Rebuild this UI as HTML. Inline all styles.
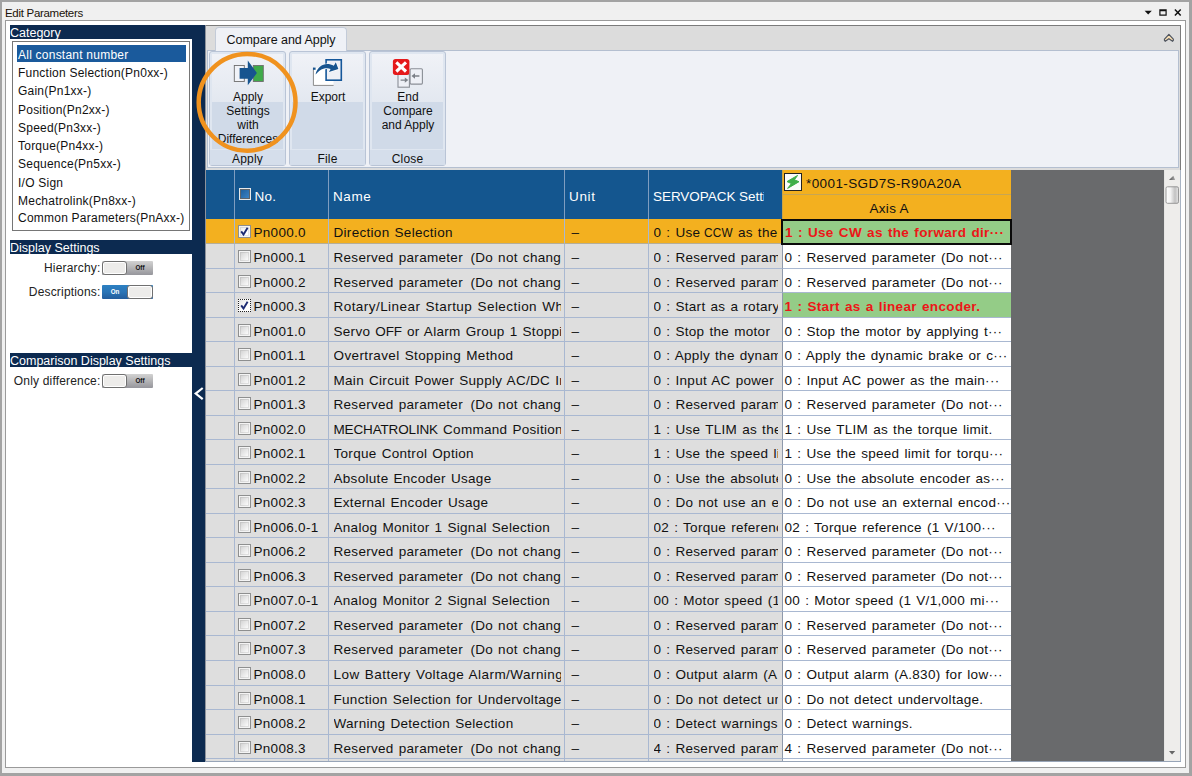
<!DOCTYPE html>
<html><head><meta charset="utf-8"><title>Edit Parameters</title>
<style>
*{box-sizing:border-box;margin:0;padding:0}
html,body{width:1192px;height:776px;overflow:hidden}
body{font-family:"Liberation Sans",sans-serif;background:#a3a3a3;position:relative;color:#111}
.abs,.abs>*{position:absolute}
i{font-style:normal}
/* window chrome */
#win{left:2px;top:2px;width:1187px;height:771px;background:#f0f0f0}
#title{left:5px;top:6px;font-size:11.5px;line-height:14px;color:#1a1208;letter-spacing:-.3px;white-space:nowrap}
#inner{left:5px;top:20px;width:1181px;height:748px;background:#fff;border:1px solid #9a9a9a}
/* left panel */
.hd{left:10px;width:182px;height:14px;background:#0c2a50;color:#fff;font-size:12.5px;line-height:16px;white-space:nowrap;overflow:hidden}
#list{left:12px;top:41px;width:178px;height:190px;border:1px solid #767676;background:#fff}
.li{left:17px;width:169px;height:17px;font-size:12px;line-height:20px;padding-left:1px;white-space:nowrap;color:#111;letter-spacing:.23px;overflow:hidden}
.li.s{background:#1a5a9c;color:#fff}
.lab{font-size:12px;line-height:14px;white-space:nowrap;text-align:right;width:100.500px;left:0;color:#222;letter-spacing:.18px}
.tg{left:102px;width:51px;height:14px;border-radius:1px;overflow:hidden;font-size:8px;font-weight:bold;line-height:14px;text-align:center}
.tg .k{top:0;width:25px;height:14px;border:1px solid #707070;border-radius:3px;background:#edecea;box-shadow:inset 0 0 0 1px #fff}
.tg .o{top:0;width:26px;height:14px;transform:scaleX(.78)}
.tg.off{background:linear-gradient(#d2d2d2,#b4b4b6 50%,#96969c)}
.tg.off .k{left:0}.tg.off .o{left:25px;color:#111}
.tg.on{background:linear-gradient(#2c80c2,#2a74b6 50%,#225c9c)}
.tg.on .k{left:25px;width:26px}.tg.on .o{left:0;color:#fff}
#split{left:192px;top:25px;width:13px;height:737px;background:#0c2a50}
/* ribbon */
#rib{left:205px;top:25px;width:976px;height:145px;background:#dcdcdc;border-top:1px solid #7b7b7b;border-right:1px solid #7b7b7b}
#tab{left:215px;top:27px;width:132px;height:24px;background:#eff1f6;border:1px solid #c3cbd8;border-bottom:none;border-radius:4px 4px 0 0;font-size:12.5px;line-height:24.500px;text-align:center;color:#111;white-space:nowrap;letter-spacing:-.05px}
#rbody{left:207px;top:50px;width:972px;height:118px;background:#eff1f6;border:1px solid #b4bfd0}
#lb{left:205px;top:25px;width:1px;height:737px;background:#8e939c}
.grp{top:51px;width:77px;height:115px;border:1px solid #b9c4d6;border-radius:3px;background:#dfe6f0}
.grp .b1{left:2px;top:2px;width:71px;height:48px;background:linear-gradient(#f0f2f7,#e3e8f0)}
.grp .b2{left:2px;top:50px;width:71px;height:47px;background:#d0dae8}
.grp .gl{left:0;top:98px;width:75px;height:15px;background:#d5deeb;font-size:12px;line-height:18px;overflow:hidden;letter-spacing:.2px;text-align:center;color:#111}
.bt{font-size:12px;line-height:14px;text-align:center;white-space:nowrap;color:#111}
/* grid */
#grid{left:206px;top:170px;width:958px;height:591px;background:#696a6c;overflow:hidden}
#gh{left:0;top:0;width:576px;height:49px;background:#14568f}
.hl{top:0;width:1px;height:49px;background:#7f9dc0}
.ht{color:#fff;font-size:13.5px;line-height:16px;white-space:nowrap;letter-spacing:.15px}
#ah{left:576px;top:0;width:229px;height:49px;background:#f3b01f;border-left:1px solid #c9a449}
.r{position:absolute;left:206px;width:805px;font-size:13.5px;white-space:nowrap;color:#111;letter-spacing:.3px;word-spacing:1px}
.r .c{position:absolute;top:0;height:100%;border-bottom:1px solid #a9b8d1;border-left:1px solid #a9b8d1;background:#dedede;overflow:hidden}
.r.sel .c{background:#f3b01f;border-bottom-color:#b5ae98}
.r.last .c{border-bottom:none}
.c0{left:0;width:29px;border-left:none!important}
.c1{left:28px;width:94px}
.c2{left:122px;width:236px}
.c3{left:358px;width:84px}
.c4{left:442px;width:134px}
.c4 .t{left:4.500px;width:124px;overflow:hidden;height:100%}
.c2 .t{left:4.500px;width:227.300px;overflow:hidden;height:100%}
.uc{letter-spacing:-.15px}
.uc2{display:inline-block;transform:scaleX(.875);transform-origin:0 50%;margin-right:-4.100px;margin-left:-1.600px}
.g{margin-left:2.400px}
.w1{letter-spacing:.45px}
.w2{letter-spacing:.38px}
.ax{left:576px;width:229px;background:#fff!important;border-left:1px solid #8e99ab!important}
.ax.diff{background:#94cc87!important;color:#ec1618;font-weight:bold;letter-spacing:.35px}
.ax.cur{border:2px solid #0a0a0a!important;left:575px;width:231px;top:0!important;height:26px!important}
.r.sel{z-index:2}
.t{position:absolute;top:1px;left:4px}
.c1 .t{left:18.500px}
.c3 .t{left:6.500px}
.ax .t{left:1.500px}
.ax.cur .t{left:2px;top:-1px}
.cb svg{position:absolute;left:0;top:0}
.cb.on{background:linear-gradient(135deg,#e4e4e4,#fff 60%)}
.cb.dot{border:1px dotted #222;box-shadow:none}
.cb{position:absolute;left:3px;top:6px;width:13px;height:13px;border:1px solid #8e8f8f;background:linear-gradient(135deg,#cbcbcb,#f7f7f7 75%);box-shadow:inset 0 0 0 1px #f4f4f4,inset 0 0 0 2px rgba(150,150,150,.25)}
/* scrollbar */
#sb{left:1164px;top:170px;width:16px;height:591px;background:#eeedeb;border-left:1px solid #e6e6e4}
#rb{left:1180px;top:170px;width:1px;height:592px;background:#a8b4c4}
#bb{left:205px;top:761px;width:976px;height:1px;background:#98a5b8}
</style></head><body>
<div class="abs">
<div id="win"></div>
<div id="title">Edit Parameters</div>
<svg style="left:1144px;top:7px" width="40" height="12" viewBox="0 0 40 12"><path d="M.6 3.800h7.200L4.200 7.400z" fill="#111"/><path d="M15.300 2.300h7.400v6.400h-7.400z M16.500 4.300v3.300h5v-3.300z" fill="#111" fill-rule="evenodd"/><path d="M30.900 2.500l5.800 6M36.700 2.500l-5.800 6" stroke="#111" stroke-width="1.500"/></svg>
<div id="inner"></div>

<!-- left panel -->
<div class="hd" style="top:25px">Category</div>
<div id="list"></div>
<div class="li s" style="top:45px">All constant number</div>
<div class="li" style="top:63px">Function Selection(Pn0xx-)</div>
<div class="li" style="top:81px">Gain(Pn1xx-)</div>
<div class="li" style="top:100px">Position(Pn2xx-)</div>
<div class="li" style="top:118px">Speed(Pn3xx-)</div>
<div class="li" style="top:136px">Torque(Pn4xx-)</div>
<div class="li" style="top:154px">Sequence(Pn5xx-)</div>
<div class="li" style="top:173px">I/O Sign</div>
<div class="li" style="top:191px">Mechatrolink(Pn8xx-)</div>
<div class="li" style="top:208px">Common Parameters(PnAxx-)</div>

<div class="hd" style="top:240px">Display Settings</div>
<div class="lab" style="top:261px">Hierarchy:</div>
<div class="tg off abs" style="top:261px"><i class="k"></i><i class="o">Off</i></div>
<div class="lab" style="top:285px">Descriptions:</div>
<div class="tg on abs" style="top:285px"><i class="k"></i><i class="o">On</i></div>
<div class="hd" style="top:353px">Comparison Display Settings</div>
<div class="lab" style="top:374px">Only difference:</div>
<div class="tg off abs" style="top:374px"><i class="k"></i><i class="o">Off</i></div>

<div id="split"></div>
<svg style="left:192px;top:384px" width="14" height="18" viewBox="0 0 14 18"><path d="M10.700 4L3.700 9.600l7 5.600" fill="none" stroke="#fff" stroke-width="2.200"/></svg>

<!-- ribbon -->
<div id="rib"></div>
<div id="rbody"></div><div id="lb"></div>
<div id="tab">Compare and Apply</div>
<svg style="left:1162px;top:32px" width="14" height="12" viewBox="0 0 14 12"><path d="M6.900 2.400L2.500 7.100Q1.900 8.300 3.200 9.300L6.900 6.700 10.600 9.300Q11.900 8.300 11.300 7.100z" fill="#f8dfb4" stroke="#4d535e" stroke-width="1.200" stroke-linejoin="round"/></svg>

<div class="grp abs" style="left:209px"><i class="b1"></i><i class="b2"></i><i class="gl">Apply</i></div>
<div class="grp abs" style="left:289px"><i class="b1"></i><i class="b2"></i><i class="gl">File</i></div>
<div class="grp abs" style="left:369px"><i class="b1"></i><i class="b2"></i><i class="gl">Close</i></div>

<div class="bt" style="left:209px;top:90px;width:78px">Apply<br>Settings<br>with<br>Differences</div>
<div class="bt" style="left:289px;top:90px;width:78px">Export</div>
<div class="bt" style="left:369px;top:90px;width:78px">End<br>Compare<br>and Apply</div>

<!-- icons -->
<svg style="left:230px;top:58px" width="38" height="30" viewBox="0 0 38 30">
<rect x="4.300" y="7.500" width="10" height="16" fill="#f1f3f8" stroke="#6e6e6e" stroke-width=".9"/>
<rect x="23.300" y="7.500" width="10" height="16" fill="#3fab4a" stroke="#6e6e6e" stroke-width=".9"/>
<path d="M9.600 9.900h8.200V2.500L26.900 15 17.800 27.200V20.800H9.600z" fill="#17548f"/></svg>
<svg style="left:310px;top:57px" width="36" height="32" viewBox="0 0 36 32">
<path d="M3.400 10.800H23.500V28.400H3.400z" fill="#fff"/><path d="M3.400 10.800V28.400H23.600" fill="none" stroke="#8a8a8a" stroke-width="1"/><path d="M3 10.600h2.600v2.200H3z" fill="#17548f"/>
<rect x="16.100" y="2.800" width="15.200" height="20.400" fill="#eef0f6" stroke="#15579a" stroke-width="1.600"/>
<path d="M5.500 17.400C7 11 12 7.200 17 7.100 19.500 7.100 22 7.700 23.800 8.700L25.800 5.200 28.400 12.100 18.900 14.900 20.600 11.900C17 10.800 13 11.500 10.600 13 8.500 14.300 7 16.200 5.500 17.400z" fill="#17548f" stroke="#fff" stroke-width="1.300" paint-order="stroke" stroke-linejoin="round"/></svg>
<svg style="left:390px;top:57px" width="36" height="32" viewBox="0 0 36 32">
<rect x="20.100" y="11.700" width="12.300" height="15.400" rx="1" fill="#eef0f6" stroke="#8a8e96" stroke-width="1.100"/>
<rect x="8" y="17" width="11.400" height="13.200" fill="#eef0f6" stroke="#8a8e96" stroke-width="1.100"/>
<path d="M10.600 23.100h5M29.400 19h-5" fill="none" stroke="#7c8088" stroke-width="1.300"/>
<path d="M14.800 20.400l3.500 2.700-3.500 2.700zM25 16.300l-3.500 2.700 3.500 2.700z" fill="#7c8088"/>
<rect x="2.900" y="2" width="16.500" height="15.900" rx="2.600" fill="#e5191b"/>
<path d="M6.300 5.400l9.700 9.100M16 5.400l-9.700 9.100" stroke="#fff" stroke-width="3.100"/></svg>

<!-- grid -->
<div id="grid" class="abs">
 <div id="gh"></div>
 <i class="hl" style="left:28px"></i><i class="hl" style="left:122px"></i><i class="hl" style="left:358px"></i><i class="hl" style="left:442px"></i>
 <i style="left:33px;top:18px;width:12px;height:12px;border:1px solid #e8e8e8;background:linear-gradient(135deg,#1b5c9a,#3f86c8);box-shadow:inset 0 0 0 1px #5c646c"></i>
 <i class="ht" style="left:48.500px;top:18.500px;letter-spacing:.2px">No.</i>
 <i class="ht" style="left:127px;top:18.500px;letter-spacing:.6px">Name</i>
 <i class="ht" style="left:363px;top:18.500px;letter-spacing:.65px">Unit</i>
 <i class="ht" style="left:447px;top:18.500px;width:110.500px;overflow:hidden;letter-spacing:-.05px">SERVOPACK Setti</i>
 <div id="ah"></div>
 <i style="left:577px;top:24px;width:228px;height:1px;background:#c7a654"></i>
 <i style="left:578px;top:3px;width:18px;height:18px;background:#fbfbfb;border:1px solid #222"></i>
 <svg style="left:578px;top:3px" width="18" height="18" viewBox="0 0 18 18"><path d="M13.600 2.400L3 8.600l4.400 2L3.600 15.400 15 8.700 10.400 6.800z" fill="#3fae49" stroke="#3fae49" stroke-width="1" stroke-linejoin="round"/></svg>
 <i class="ht" style="left:600px;top:5.500px;color:#111;font-size:13.5px;letter-spacing:.4px">*0001-SGD7S-R90A20A</i>
 <i class="ht" style="left:663.500px;top:30.500px;color:#111;font-size:13.5px;letter-spacing:.3px">Axis A</i>
</div>
<div class="r sel" style="top:219px;height:25px;line-height:26px"><i class="c c0"></i><i class="c c1"><b class="cb on"><svg width="11" height="11" viewBox="0 0 11 11"><path d="M2.200 5.400l2.300 3.200L8.600 1.800" fill="none" stroke="#1d2b73" stroke-width="1.900"/></svg></b><span class="t no">Pn000.0</span></i><i class="c c2"><span class="t nm">Direction Selection</span></i><i class="c c3"><span class="t">–</span></i><i class="c c4"><span class="t sv">0 : Use <span class=uc2>CCW</span> as the forward</span></i><i class="c ax diff cur"><span class="t av">1 : Use CW as the forward dir···</span></i></div>
<div class="r" style="top:244px;height:25px;line-height:26px"><i class="c c0"></i><i class="c c1"><b class="cb"></b><span class="t no">Pn000.1</span></i><i class="c c2"><span class="t nm">Reserved parameter <span class=g>(Do</span> not change</span></i><i class="c c3"><span class="t">–</span></i><i class="c c4"><span class="t sv">0 : Reserved parameter</span></i><i class="c ax"><span class="t av">0 : Reserved parameter (Do not···</span></i></div>
<div class="r" style="top:269px;height:24px;line-height:25px"><i class="c c0"></i><i class="c c1"><b class="cb"></b><span class="t no">Pn000.2</span></i><i class="c c2"><span class="t nm">Reserved parameter <span class=g>(Do</span> not change</span></i><i class="c c3"><span class="t">–</span></i><i class="c c4"><span class="t sv">0 : Reserved parameter</span></i><i class="c ax"><span class="t av">0 : Reserved parameter (Do not···</span></i></div>
<div class="r" style="top:293px;height:25px;line-height:26px"><i class="c c0"></i><i class="c c1"><b class="cb on dot"><svg width="11" height="11" viewBox="0 0 11 11"><path d="M2.200 5.400l2.300 3.200L8.600 1.800" fill="none" stroke="#1d2b73" stroke-width="1.900"/></svg></b><span class="t no">Pn000.3</span></i><i class="c c2"><span class="t nm"><span class=w1>Rotary/Linear Startup Selection Whe</span></span></i><i class="c c3"><span class="t">–</span></i><i class="c c4"><span class="t sv">0 : Start as a rotary</span></i><i class="c ax diff"><span class="t av">1 : Start as a linear encoder.</span></i></div>
<div class="r" style="top:318px;height:24px;line-height:25px"><i class="c c0"></i><i class="c c1"><b class="cb"></b><span class="t no">Pn001.0</span></i><i class="c c2"><span class="t nm">Servo <span class=uc>OFF</span> or Alarm Group 1 Stopping</span></i><i class="c c3"><span class="t">–</span></i><i class="c c4"><span class="t sv">0 : Stop the motor</span></i><i class="c ax"><span class="t av">0 : Stop the motor by applying t···</span></i></div>
<div class="r" style="top:342px;height:25px;line-height:26px"><i class="c c0"></i><i class="c c1"><b class="cb"></b><span class="t no">Pn001.1</span></i><i class="c c2"><span class="t nm"><span class=w2>Overtravel Stopping Method</span></span></i><i class="c c3"><span class="t">–</span></i><i class="c c4"><span class="t sv">0 : Apply the dynam</span></i><i class="c ax"><span class="t av">0 : Apply the dynamic brake or c···</span></i></div>
<div class="r" style="top:367px;height:24px;line-height:25px"><i class="c c0"></i><i class="c c1"><b class="cb"></b><span class="t no">Pn001.2</span></i><i class="c c2"><span class="t nm">Main Circuit Power Supply AC/DC In</span></i><i class="c c3"><span class="t">–</span></i><i class="c c4"><span class="t sv">0 : Input AC power</span></i><i class="c ax"><span class="t av">0 : Input AC power as the main···</span></i></div>
<div class="r" style="top:391px;height:25px;line-height:26px"><i class="c c0"></i><i class="c c1"><b class="cb"></b><span class="t no">Pn001.3</span></i><i class="c c2"><span class="t nm">Reserved parameter <span class=g>(Do</span> not change</span></i><i class="c c3"><span class="t">–</span></i><i class="c c4"><span class="t sv">0 : Reserved parameter</span></i><i class="c ax"><span class="t av">0 : Reserved parameter (Do not···</span></i></div>
<div class="r" style="top:416px;height:24px;line-height:25px"><i class="c c0"></i><i class="c c1"><b class="cb"></b><span class="t no">Pn002.0</span></i><i class="c c2"><span class="t nm"><span class=uc>MECHATROLINK</span> Command Position a</span></i><i class="c c3"><span class="t">–</span></i><i class="c c4"><span class="t sv">1 : Use TLIM as the t</span></i><i class="c ax"><span class="t av">1 : Use TLIM as the torque limit.</span></i></div>
<div class="r" style="top:440px;height:25px;line-height:26px"><i class="c c0"></i><i class="c c1"><b class="cb"></b><span class="t no">Pn002.1</span></i><i class="c c2"><span class="t nm">Torque Control Option</span></i><i class="c c3"><span class="t">–</span></i><i class="c c4"><span class="t sv">1 : Use the speed lim</span></i><i class="c ax"><span class="t av">1 : Use the speed limit for torqu···</span></i></div>
<div class="r" style="top:465px;height:24px;line-height:25px"><i class="c c0"></i><i class="c c1"><b class="cb"></b><span class="t no">Pn002.2</span></i><i class="c c2"><span class="t nm">Absolute Encoder Usage</span></i><i class="c c3"><span class="t">–</span></i><i class="c c4"><span class="t sv">0 : Use the absolute</span></i><i class="c ax"><span class="t av">0 : Use the absolute encoder as···</span></i></div>
<div class="r" style="top:489px;height:25px;line-height:26px"><i class="c c0"></i><i class="c c1"><b class="cb"></b><span class="t no">Pn002.3</span></i><i class="c c2"><span class="t nm">External Encoder Usage</span></i><i class="c c3"><span class="t">–</span></i><i class="c c4"><span class="t sv">0 : Do not use an ex</span></i><i class="c ax"><span class="t av">0 : Do not use an external encod···</span></i></div>
<div class="r" style="top:514px;height:24px;line-height:25px"><i class="c c0"></i><i class="c c1"><b class="cb"></b><span class="t no">Pn006.0-1</span></i><i class="c c2"><span class="t nm">Analog Monitor 1 Signal Selection</span></i><i class="c c3"><span class="t">–</span></i><i class="c c4"><span class="t sv">02 : Torque reference</span></i><i class="c ax"><span class="t av">02 : Torque reference (1 V/100···</span></i></div>
<div class="r" style="top:538px;height:25px;line-height:26px"><i class="c c0"></i><i class="c c1"><b class="cb"></b><span class="t no">Pn006.2</span></i><i class="c c2"><span class="t nm">Reserved parameter <span class=g>(Do</span> not change</span></i><i class="c c3"><span class="t">–</span></i><i class="c c4"><span class="t sv">0 : Reserved parameter</span></i><i class="c ax"><span class="t av">0 : Reserved parameter (Do not···</span></i></div>
<div class="r" style="top:563px;height:24px;line-height:25px"><i class="c c0"></i><i class="c c1"><b class="cb"></b><span class="t no">Pn006.3</span></i><i class="c c2"><span class="t nm">Reserved parameter <span class=g>(Do</span> not change</span></i><i class="c c3"><span class="t">–</span></i><i class="c c4"><span class="t sv">0 : Reserved parameter</span></i><i class="c ax"><span class="t av">0 : Reserved parameter (Do not···</span></i></div>
<div class="r" style="top:587px;height:25px;line-height:26px"><i class="c c0"></i><i class="c c1"><b class="cb"></b><span class="t no">Pn007.0-1</span></i><i class="c c2"><span class="t nm">Analog Monitor 2 Signal Selection</span></i><i class="c c3"><span class="t">–</span></i><i class="c c4"><span class="t sv">00 : Motor speed (1 V</span></i><i class="c ax"><span class="t av">00 : Motor speed (1 V/1,000 mi···</span></i></div>
<div class="r" style="top:612px;height:24px;line-height:25px"><i class="c c0"></i><i class="c c1"><b class="cb"></b><span class="t no">Pn007.2</span></i><i class="c c2"><span class="t nm">Reserved parameter <span class=g>(Do</span> not change</span></i><i class="c c3"><span class="t">–</span></i><i class="c c4"><span class="t sv">0 : Reserved parameter</span></i><i class="c ax"><span class="t av">0 : Reserved parameter (Do not···</span></i></div>
<div class="r" style="top:636px;height:25px;line-height:26px"><i class="c c0"></i><i class="c c1"><b class="cb"></b><span class="t no">Pn007.3</span></i><i class="c c2"><span class="t nm">Reserved parameter <span class=g>(Do</span> not change</span></i><i class="c c3"><span class="t">–</span></i><i class="c c4"><span class="t sv">0 : Reserved parameter</span></i><i class="c ax"><span class="t av">0 : Reserved parameter (Do not···</span></i></div>
<div class="r" style="top:661px;height:25px;line-height:26px"><i class="c c0"></i><i class="c c1"><b class="cb"></b><span class="t no">Pn008.0</span></i><i class="c c2"><span class="t nm"><span class=w1>Low Battery Voltage Alarm/Warning</span></span></i><i class="c c3"><span class="t">–</span></i><i class="c c4"><span class="t sv">0 : Output alarm (A.</span></i><i class="c ax"><span class="t av">0 : Output alarm (A.830) for low···</span></i></div>
<div class="r" style="top:686px;height:24px;line-height:25px"><i class="c c0"></i><i class="c c1"><b class="cb"></b><span class="t no">Pn008.1</span></i><i class="c c2"><span class="t nm">Function Selection for Undervoltage</span></i><i class="c c3"><span class="t">–</span></i><i class="c c4"><span class="t sv">0 : Do not detect un</span></i><i class="c ax"><span class="t av">0 : Do not detect undervoltage.</span></i></div>
<div class="r" style="top:710px;height:25px;line-height:26px"><i class="c c0"></i><i class="c c1"><b class="cb"></b><span class="t no">Pn008.2</span></i><i class="c c2"><span class="t nm">Warning Detection Selection</span></i><i class="c c3"><span class="t">–</span></i><i class="c c4"><span class="t sv">0 : Detect warnings.</span></i><i class="c ax"><span class="t av">0 : Detect warnings.</span></i></div>
<div class="r" style="top:735px;height:24px;line-height:25px"><i class="c c0"></i><i class="c c1"><b class="cb"></b><span class="t no">Pn008.3</span></i><i class="c c2"><span class="t nm">Reserved parameter <span class=g>(Do</span> not change</span></i><i class="c c3"><span class="t">–</span></i><i class="c c4"><span class="t sv">4 : Reserved parameter</span></i><i class="c ax"><span class="t av">4 : Reserved parameter (Do not···</span></i></div>
<div class="r last" style="top:759px;height:2px"><i class="c c0"></i><i class="c c1"></i><i class="c c2"></i><i class="c c3"></i><i class="c c4"></i><i class="c ax"></i></div>

<!-- scrollbar -->
<div id="sb"></div><div id="rb"></div><div id="bb"></div>
<svg style="left:1164px;top:170px" width="17" height="592" viewBox="0 0 17 592"><defs><linearGradient id="tg" x1="0" x2="1"><stop offset="0" stop-color="#fff"/><stop offset=".35" stop-color="#f4f4f4"/><stop offset=".72" stop-color="#c2c2c2"/><stop offset="1" stop-color="#e4e4e4"/></linearGradient><linearGradient id="ag" x1="0" x2="1"><stop offset="0" stop-color="#555"/><stop offset="1" stop-color="#aaa"/></linearGradient></defs><path d="M5 10h6.200L9.300 5.800z" fill="url(#ag)"/><rect x="2" y="16.800" width="12.500" height="16.500" rx="1.500" fill="url(#tg)" stroke="#8f8f8f" stroke-width=".9"/><path d="M5 581h6.200l-3.100 3.600z" fill="#666"/></svg>

<!-- highlight circle -->
<svg style="left:190px;top:46px" width="114" height="114" viewBox="0 0 114 114"><circle cx="57.100" cy="56.300" r="48.400" fill="none" stroke="#f0921e" stroke-width="4.500"/></svg>
</div>
</body></html>
